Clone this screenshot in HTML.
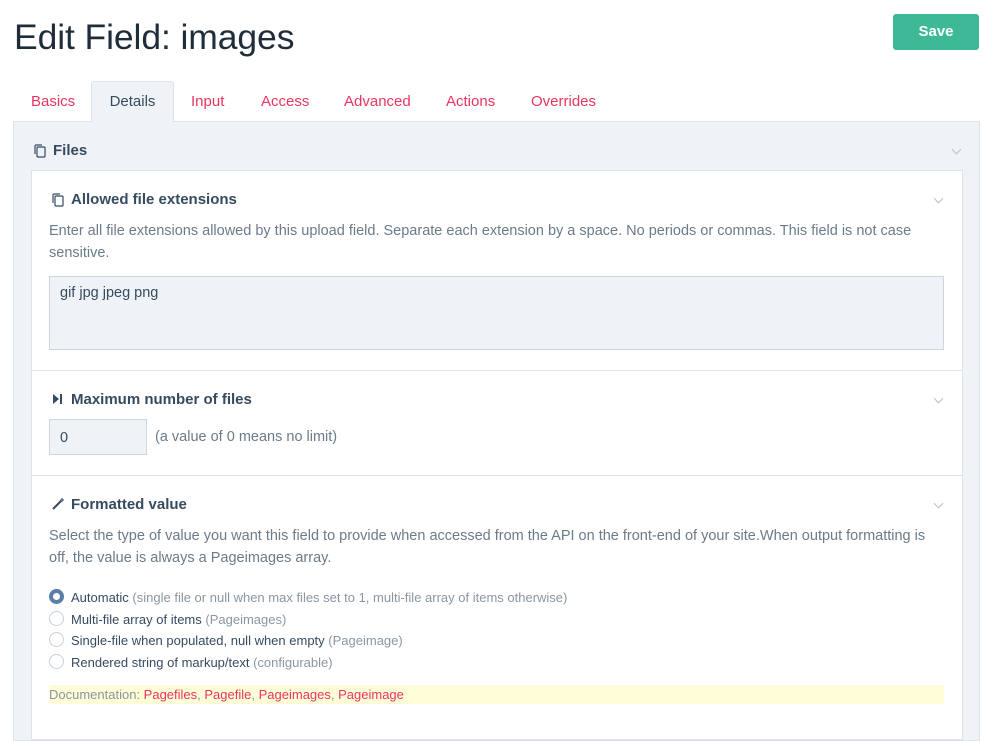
<!DOCTYPE html>
<html><head><style>
*{box-sizing:border-box;margin:0;padding:0}
body{width:1000px;height:723px;overflow:hidden;background:#fff;font-family:"Liberation Sans",sans-serif;color:#354b60;position:relative}
.a{position:absolute}
h1{position:absolute;left:14px;top:17px;font-size:35.5px;font-weight:400;color:#1f2d3a;letter-spacing:-0.1px}
.save{left:893px;top:14px;width:86px;height:36px;background:#3eb998;border-radius:3px;color:#fff;font-size:15px;text-align:center;line-height:36px;font-weight:bold}
.tab{top:93px;font-size:15px;color:#e83561}
.det{left:91px;top:81px;width:83px;height:41px;background:#eff3f7;border:1px solid #dde3ea;border-bottom:none;border-radius:3px 3px 0 0;color:#354b60;font-size:15px;text-align:center;line-height:40px}
.outer{left:13px;top:121px;width:967px;height:620px;background:#eff3f7;border:1px solid #dde3ea}
.inner{left:31px;top:170px;width:932px;height:570px;background:#fff;border:1px solid #dde3ea}
.hd{font-size:15px;font-weight:bold;color:#354b60}
.txt{font-size:14.5px;color:#6b7b8a;line-height:22px}
.chev{width:7px;height:7px;border-right:1px solid #b8c2cc;border-bottom:1px solid #b8c2cc;transform:rotate(45deg)}
.hr{left:32px;width:930px;height:1px;background:#dde3ea}
.ta{left:49px;top:276px;width:895px;height:74px;background:#eff3f7;border:1px solid #cdd6df;padding:8px 10px;font-size:14.5px;color:#354b60}
.inp{left:49px;top:419px;width:98px;height:36px;background:#eff3f7;border:1px solid #cdd6df;padding:0 10px;line-height:36px;font-size:14.5px}
.r{left:49px;width:15px;height:15px;border:1px solid #c8d0d8;border-radius:50%;background:#fff}
.rl{left:71px;font-size:13px;color:#354b60}
.rl span{color:#8a96a2}
</style></head><body>
<h1>Edit Field: images</h1>
<div class="a save">Save</div>
<div class="a outer"></div>
<div class="a det">Details</div>
<div class="a tab" style="left:31px">Basics</div>
<div class="a tab" style="left:191px">Input</div>
<div class="a tab" style="left:261px">Access</div>
<div class="a tab" style="left:344px">Advanced</div>
<div class="a tab" style="left:446px">Actions</div>
<div class="a tab" style="left:531px">Overrides</div>
<svg class="a" style="left:32px;top:143px" width="16" height="16" viewBox="0 0 16 16" fill="none" stroke="#354b60" stroke-width="1.2"><rect x="5" y="4" width="8" height="10" rx="1"/><path d="M3 11V3a1 1 0 0 1 1-1h6"/></svg>
<div class="a hd" style="left:53px;top:142px">Files</div>
<div class="a chev" style="left:953px;top:146px"></div>
<div class="a inner"></div>
<svg class="a" style="left:50px;top:192px" width="16" height="16" viewBox="0 0 16 16" fill="none" stroke="#354b60" stroke-width="1.2"><rect x="5" y="4" width="8" height="10" rx="1"/><path d="M3 11V3a1 1 0 0 1 1-1h6"/></svg>
<div class="a hd" style="left:71px;top:191px">Allowed file extensions</div>
<div class="a chev" style="left:935px;top:195px"></div>
<div class="a txt" style="left:49px;top:220px;width:890px">Enter all file extensions allowed by this upload field. Separate each extension by a space. No periods or commas. This field is not case sensitive.</div>
<div class="a ta">gif jpg jpeg png</div>
<div class="a hr" style="top:370px"></div>
<svg class="a" style="left:52px;top:393px" width="12" height="12" viewBox="0 0 12 12"><path d="M1 1L7 6L1 11Z" fill="#354b60"/><rect x="8" y="1" width="2" height="10" fill="#354b60"/></svg>
<div class="a hd" style="left:71px;top:391px">Maximum number of files</div>
<div class="a chev" style="left:935px;top:395px"></div>
<div class="a inp">0</div>
<div class="a txt" style="left:155px;top:426px">(a value of 0 means no limit)</div>
<div class="a hr" style="top:475px"></div>
<svg class="a" style="left:51px;top:497px" width="14" height="14" viewBox="0 0 14 14" stroke="#354b60" stroke-width="2"><path d="M2 12L10 4"/><path d="M11 1v4M9 3h4" stroke-width="1"/></svg>
<div class="a hd" style="left:71px;top:496px">Formatted value</div>
<div class="a chev" style="left:935px;top:500px"></div>
<div class="a txt" style="left:49px;top:525px;width:898px">Select the type of value you want this field to provide when accessed from the API on the front-end of your site.When output formatting is off, the value is always a Pageimages array.</div>
<div class="a r" style="top:589px;border:4.5px solid #5b7fa8"></div>
<div class="a rl" style="top:590px">Automatic <span>(single file or null when max files set to 1, multi-file array of items otherwise)</span></div>
<div class="a r" style="top:611px"></div>
<div class="a rl" style="top:612px">Multi-file array of items <span>(Pageimages)</span></div>
<div class="a r" style="top:632px"></div>
<div class="a rl" style="top:633px">Single-file when populated, null when empty <span>(Pageimage)</span></div>
<div class="a r" style="top:654px"></div>
<div class="a rl" style="top:655px">Rendered string of markup/text <span>(configurable)</span></div>
<div class="a" style="left:49px;top:685px;width:895px;height:19px;background:#fffdd8;font-size:13px;line-height:19px;color:#8a96a2">Documentation: <span style="color:#e83561">Pagefiles</span>, <span style="color:#e83561">Pagefile</span>, <span style="color:#e83561">Pageimages</span>, <span style="color:#e83561">Pageimage</span></div>
</body></html>
